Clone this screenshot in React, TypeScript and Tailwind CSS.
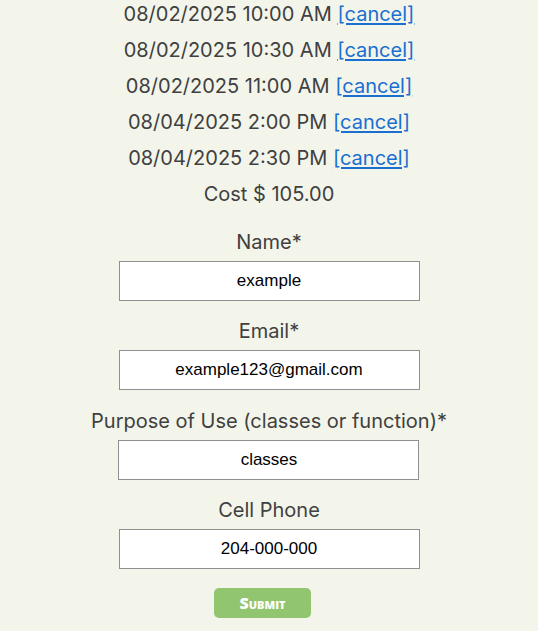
const SLOTS = [
  "08/02/2025 10:00 AM",
  "08/02/2025 10:30 AM",
  "08/02/2025 11:00 AM",
  "08/04/2025 2:00 PM",
  "08/04/2025 2:30 PM",
]

const FIELDS = [
  { label: "Name*", value: "example", gap: "mt-[16px]" },
  { label: "Email*", value: "example123@gmail.com", gap: "mt-[16px]" },
  { label: "Purpose of Use (classes or function)*", value: "classes", gap: "mt-[17px]" },
  { label: "Cell Phone", value: "204-000-000", gap: "mt-[16px]" },
]

export default function App() {
  return (
    <div className="min-h-[631px] w-[538px] overflow-hidden bg-[#f3f5eb] font-['Inter',sans-serif] text-[20px] text-[#404040]">
      <div className="-mt-[4px] flex flex-col items-center">
        {SLOTS.map((s) => (
          <div key={s} className="leading-[36px]">
            {s}{" "}
            <a href="#" className="text-[#1a6fd1] underline underline-offset-2">
              [cancel]
            </a>
          </div>
        ))}
        <div className="leading-[36px]">Cost $ 105.00</div>

        {FIELDS.map((f) => (
          <div key={f.label} className={`flex flex-col items-center ${f.gap}`}>
            <label className="pt-[2px] leading-[25px]">{f.label}</label>
            <input
              readOnly
              value={f.value}
              className="mt-[6px] h-[40px] w-[301px] border border-[#8f8f8f] bg-white text-center font-['Liberation_Sans',Arial,sans-serif] text-[17px] text-black outline-none"
            />
          </div>
        ))}

        <button className="mr-[13px] mt-[19px] h-[30px] w-[97px] rounded-[5px] bg-[#92c56f] font-['Open_Sans',sans-serif] text-[16px] font-extrabold text-white [font-variant:small-caps]">
          Submit
        </button>
      </div>
    </div>
  )
}
